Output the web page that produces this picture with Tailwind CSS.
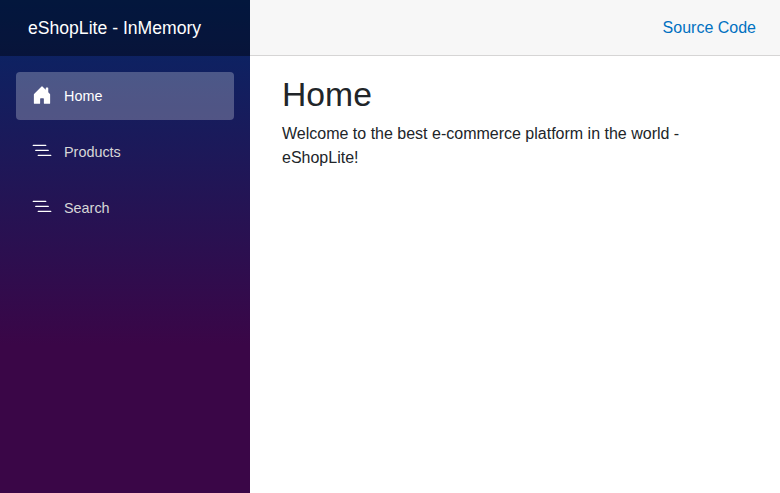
<!DOCTYPE html>
<html lang="en">
<head>
<meta charset="utf-8">
<title>Home</title>
<script src="https://cdn.jsdelivr.net/npm/@tailwindcss/browser@4"></script>
</head>
<body class="bg-white font-['Liberation_Sans',Arial,sans-serif] text-base leading-6 text-[#212529]">
<div class="flex h-screen overflow-hidden">
  <aside class="w-[250px] shrink-0 bg-[linear-gradient(180deg,rgb(5,39,103)_0%,#3a0647_70%)]">
    <div class="flex h-14 items-center bg-black/40 pl-7">
      <a class="text-[17.6px] text-white">eShopLite - InMemory</a>
    </div>
    <nav class="flex flex-col gap-2 px-4 pt-4 text-[14.4px]">
      <a class="flex h-12 items-center rounded bg-white/25 pl-4 text-white">
        <svg class="relative -top-px mr-3 size-5" viewBox="0 0 16 16" fill="currentColor"><path d="M6.5 14.5v-3.505c0-.245.25-.495.5-.495h2c.25 0 .5.25.5.5v3.5a.5.5 0 0 0 .5.5h4a.5.5 0 0 0 .5-.5v-7a.5.5 0 0 0-.146-.354L13 5.793V2.5a.5.5 0 0 0-.5-.5h-1a.5.5 0 0 0-.5.5v1.293L8.354 1.146a.5.5 0 0 0-.708 0l-6 6A.5.5 0 0 0 1.5 7.5v7a.5.5 0 0 0 .5.5h4a.5.5 0 0 0 .5-.5Z"/></svg>
        Home
      </a>
      <a class="flex h-12 items-center rounded pl-4 text-[#d7d7d7]">
        <svg class="relative -top-px mr-3 size-5 text-white" viewBox="0 0 16 16" fill="currentColor"><path fill-rule="evenodd" d="M4.5 11.5A.5.5 0 0 1 5 11h10a.5.5 0 0 1 0 1H5a.5.5 0 0 1-.5-.5zm-2-4A.5.5 0 0 1 3 7h10a.5.5 0 0 1 0 1H3a.5.5 0 0 1-.5-.5zm-2-4A.5.5 0 0 1 1 3h10a.5.5 0 0 1 0 1H1a.5.5 0 0 1-.5-.5z"/></svg>
        Products
      </a>
      <a class="flex h-12 items-center rounded pl-4 text-[#d7d7d7]">
        <svg class="relative -top-px mr-3 size-5 text-white" viewBox="0 0 16 16" fill="currentColor"><path fill-rule="evenodd" d="M4.5 11.5A.5.5 0 0 1 5 11h10a.5.5 0 0 1 0 1H5a.5.5 0 0 1-.5-.5zm-2-4A.5.5 0 0 1 3 7h10a.5.5 0 0 1 0 1H3a.5.5 0 0 1-.5-.5zm-2-4A.5.5 0 0 1 1 3h10a.5.5 0 0 1 0 1H1a.5.5 0 0 1-.5-.5z"/></svg>
        Search
      </a>
    </nav>
  </aside>
  <main class="min-w-0 flex-1">
    <div class="flex h-14 items-center justify-end border-b border-[#d6d5d5] bg-[#f7f7f7] pr-6">
      <a class="text-[#0071c1]">Source Code</a>
    </div>
    <article class="pt-[17.6px] pr-6 pl-8">
      <h1 class="mb-2 text-[33.7px] leading-[1.2] font-medium">Home</h1>
      <p>Welcome to the best e-commerce platform in the world - eShopLite!</p>
    </article>
  </main>
</div>
</body>
</html>
